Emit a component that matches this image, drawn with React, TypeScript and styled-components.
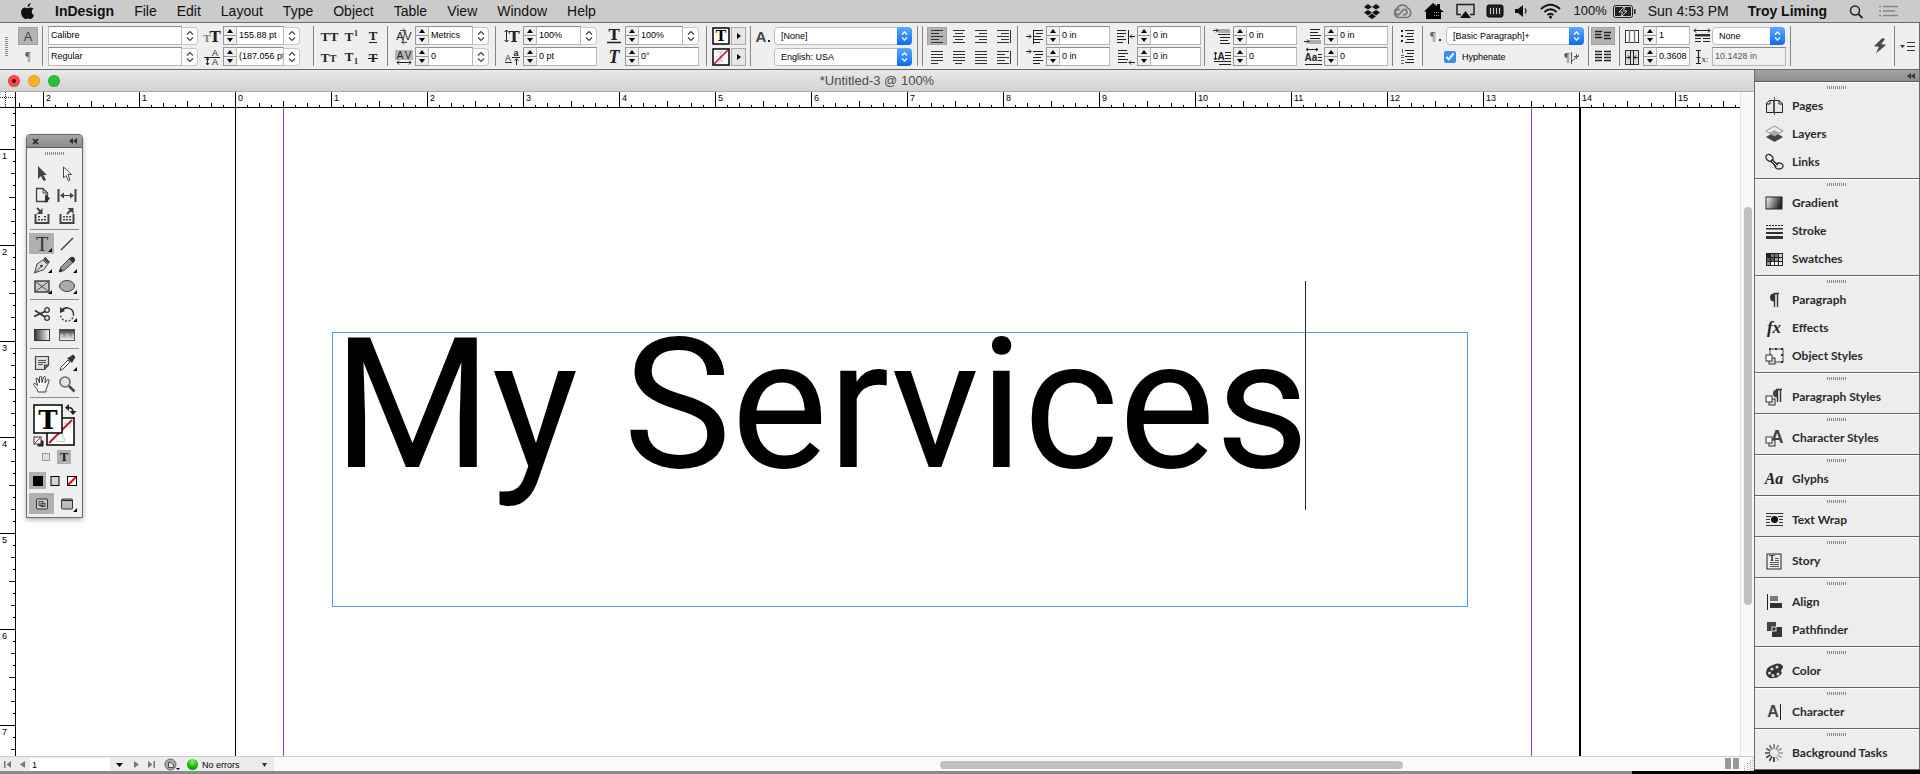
import React from "react";
import styled, { createGlobalStyle, css } from "styled-components";

const GlobalStyle = createGlobalStyle`
  * { box-sizing: border-box; }
  body { margin: 0; background: #8b8b8b; font-family: "Liberation Sans", Arial, sans-serif; color: #000; }
  button, input, select { font: inherit; color: inherit; margin: 0; padding: 0; border: 0; background: none; border-radius: 0; }
  h1, p { margin: 0; font-weight: 400; }
  svg { display: block; flex: none; overflow: visible; }
`;

/* ---------- shell ---------- */
const Page = styled.div`
  display: flex;
  flex-direction: column;
  min-height: 100vh;
  overflow: hidden;
`;
const Workspace = styled.div`
  flex: 1;
  display: flex;
  background: linear-gradient(to right, #8b8b8b 85%, #000 85%);
`;

/* ---------- menu bar ---------- */
const MenuBar = styled.header`
  display: flex;
  align-items: center;
  height: 22px;
  padding: 0 22px 0 20px;
  background: #cbcbcb;
  font-size: 14px;
  line-height: 18px;
  color: #111;
`;
const MenuNav = styled.nav`
  display: flex;
  gap: 20px;
  margin-left: 20px;
  flex: 1;
`;
const MenuItem = styled.button<{ $bold?: boolean }>`
  font-weight: ${(p) => (p.$bold ? 700 : 400)};
  white-space: nowrap;
`;
const StatusItems = styled.div<{ $gap: number }>`
  display: flex;
  align-items: center;
  gap: ${(p) => p.$gap}px;
  white-space: nowrap;
`;
const Battery = styled.span`
  display: flex;
  align-items: center;
  gap: 6px;
  font-size: 13px;
`;

/* ---------- control bar ---------- */
const ControlBar = styled.section`
  display: flex;
  height: 48px;
  border: 1px solid #6a6a6a;
  border-left-width: 0;
  background: #efefef;
  font-size: 9px;
  line-height: 16px;
  padding: 3px 0;
`;
const Section = styled.div<{ $w?: number; $pad?: number; $gap?: number; $plain?: boolean; $end?: boolean }>`
  display: flex;
  flex: none;
  align-items: center;
  height: 40px;
  gap: ${(p) => p.$gap ?? 2}px;
  padding-left: ${(p) => p.$pad ?? 5}px;
  border-left: ${(p) => (p.$plain ? "0" : "1px solid #858585")};
  ${(p) => (p.$w ? css`width: ${p.$w}px;` : css`flex: 1;`)}
  ${(p) => p.$end && css`justify-content: flex-end; padding-right: 4px;`}
`;
const Stack = styled.div`
  display: flex;
  flex-direction: column;
  gap: 2px;
`;
const Row = styled.div<{ $gap?: number }>`
  display: flex;
  align-items: center;
  gap: ${(p) => p.$gap ?? 2}px;
  height: 19px;
`;
const Field = styled.label`
  display: flex;
  align-items: center;
  height: 19px;
`;
const FieldIcon = styled.span<{ $w?: number }>`
  width: ${(p) => p.$w ?? 18}px;
  margin-right: 2px;
  display: flex;
  justify-content: center;
`;
const TextInput = styled.input<{ $w: number; $dim?: boolean }>`
  width: ${(p) => p.$w}px;
  height: 19px;
  padding: 0 0 2px 2px;
  border: 1px solid #b9b9b9;
  border-top-color: #8a8a8a;
  background: ${(p) => (p.$dim ? "#f0f0f0" : "#fff")};
  color: ${(p) => (p.$dim ? "#555" : "#000")};
`;
const ComboButton = styled.button`
  display: flex;
  align-items: center;
  justify-content: center;
  width: 16px;
  height: 18px;
  background: #fff;
  border: 1px solid #c8c8c8;
  border-left: 0;
  border-radius: 0 4px 4px 0;
`;
const Spin = styled.span`
  display: flex;
  flex-direction: column;
  width: 13px;
  height: 19px;
  border: 1px solid #999;
  border-right: 0;
  background: #f0f0f0;
`;
const SpinButton = styled.button`
  flex: 1;
  display: flex;
  align-items: center;
  justify-content: center;
  & + & { border-top: 1px solid #999; }
`;
const IconButton = styled.button<{ $w?: number; $on?: boolean }>`
  display: flex;
  align-items: center;
  justify-content: center;
  width: ${(p) => p.$w ?? 20}px;
  height: 18px;
  background: ${(p) => (p.$on ? "#b3b3b3" : "transparent")};
  box-shadow: ${(p) => (p.$on ? "inset 0 0 0 1px #a2a2a2" : "none")};
`;
const ArrowButton = styled.button`
  display: flex;
  align-items: center;
  justify-content: center;
  width: 15px;
  height: 18px;
  background: #e6e6e6;
  border: 1px solid #aaa;
`;
const SelectBox = styled.span<{ $w: number }>`
  position: relative;
  display: block;
  width: ${(p) => p.$w}px;
  height: 18px;
  svg { position: absolute; right: 0; top: 0; pointer-events: none; }
`;
const Select = styled.select`
  appearance: none;
  width: 100%;
  height: 18px;
  padding: 0 16px 0 6px;
  background: #fff;
  border: 1px solid #bcbcbc;
  border-radius: 4px;
`;
const Check = styled.label`
  display: flex;
  align-items: center;
  gap: 6px;
  padding-left: 18px;
  input { width: 12px; height: 12px; accent-color: #3b8cf5; }
`;
const Grip = styled.i<{ $vertical?: boolean }>`
  display: block;
  ${(p) =>
    p.$vertical
      ? css`width: 3px; height: 19px; background: repeating-linear-gradient(#8a8a8a 0 1px, #efefef 1px 2px);`
      : css`width: 20px; height: 3px; margin: 0 auto; background: repeating-linear-gradient(90deg, #8a8a8a 0 1px, #eee 1px 2px);`}
`;

/* ---------- document window ---------- */
const DocWindow = styled.main`
  flex: 1;
  min-width: 0;
  display: grid;
  grid-template-columns: 16px minmax(0, 1fr) 14px;
  grid-template-rows: 22px 16px minmax(0, 1fr) 15px;
  margin-bottom: 3px;
  background: #fff;
`;
const TitleBar = styled.div`
  grid-column: 1 / -1;
  display: grid;
  grid-template-columns: 60px 1fr 60px;
  align-items: center;
  padding-left: 8px;
  padding-right: 8px;
  background: linear-gradient(#e9e9e9, #d3d3d3);
  border-bottom: 1px solid #ababab;
  font-size: 13px;
  line-height: 20px;
  color: #4b4b4b;
  text-align: center;
`;
const Lights = styled.div`
  display: flex;
  gap: 8px;
`;
const Light = styled.button<{ $c: string }>`
  width: 12px;
  height: 12px;
  border-radius: 50%;
  background: ${(p) => p.$c};
  border: 1px solid rgba(0, 0, 0, 0.12);
  display: flex;
  align-items: center;
  justify-content: center;
`;
const Corner = styled.div`
  overflow: hidden;
  border-right: 1px solid #000;
  border-bottom: 1px solid #000;
`;
const tickX = "linear-gradient(90deg, #000 1px, transparent 1px)";
const tickY = "linear-gradient(#000 1px, transparent 1px)";
const HRuler = styled.div`
  display: flex;
  overflow: hidden;
  border-bottom: 1px solid #000;
`;
const HInch = styled.span`
  flex: none;
  width: 96px;
  padding-left: 2px;
  border-left: 1px solid #000;
  font-size: 9px;
  line-height: 12px;
  background: ${tickX} -1px 100% / 12px 2px repeat-x, ${tickX} -1px 100% / 24px 4px repeat-x,
    ${tickX} -1px 100% / 48px 6px repeat-x;
  &:first-child { margin-left: -69px; }
  &:last-child { flex: 1 0 0; width: auto; min-width: 0; }
`;
const VRuler = styled.div`
  grid-column: 1;
  display: flex;
  flex-direction: column;
  height: 0;
  min-height: 100%;
  overflow: hidden;
  border-right: 1px solid #000;
`;
const VInch = styled.span`
  flex: none;
  height: 96px;
  padding-left: 2px;
  border-top: 1px solid #000;
  font-size: 9px;
  line-height: 12px;
  background: ${tickY} 100% -1px / 2px 12px repeat-y, ${tickY} 100% -1px / 4px 24px repeat-y,
    ${tickY} 100% -1px / 6px 48px repeat-y;
  &:first-child { margin-top: -55px; }
  &:last-child { flex: 1 0 0; height: auto; }
`;
const Canvas = styled.div`
  position: relative;
  overflow: hidden;
  min-height: 648px;
`;
const Guide = styled.i<{ $x: number; $c: string; $w?: number }>`
  position: absolute;
  top: 0;
  bottom: 0;
  left: ${(p) => p.$x}px;
  width: ${(p) => p.$w ?? 1}px;
  background: ${(p) => p.$c};
`;
const TextFrame = styled.div`
  position: absolute;
  left: 316px;
  top: 224px;
  width: 1136px;
  height: 275px;
  border: 1px solid #4a9cf8;
`;
const Headline = styled.h1`
  position: relative;
  display: inline-block;
  font-family: Roboto, sans-serif;
  font-size: 182px;
  line-height: 144px;
  white-space: nowrap;
`;
const Caret = styled.i`
  position: absolute;
  right: 3px;
  top: -52px;
  width: 1px;
  height: 229px;
  background: #222;
`;
const VScroll = styled.div`
  grid-column: 3;
  grid-row: 2 / 4;
  padding: 115px 2px 0 3px;
  background: #f9f9f9;
  border-left: 1px solid #e2e2e2;
`;
const Thumb = styled.i<{ $w: number; $h: number }>`
  display: block;
  width: ${(p) => p.$w}px;
  height: ${(p) => p.$h}px;
  border-radius: 4px;
  background: #c0c0c0;
`;
const StatusBar = styled.footer`
  grid-column: 1 / -1;
  display: flex;
  align-items: stretch;
  background: #fafafa;
  border-top: 1px solid #ccc;
  font-size: 9px;
  line-height: 14px;
`;
const StatusControls = styled.div`
  display: flex;
  align-items: center;
  width: 274px;
  padding-top: 1px;
  background: #ececec;
`;
const StatusButton = styled.button<{ $w: number }>`
  display: flex;
  align-items: center;
  justify-content: center;
  width: ${(p) => p.$w}px;
  height: 13px;
`;
const PageInput = styled.input`
  width: 80px;
  height: 13px;
  padding-left: 2px;
  background: #fff;
`;
const Preflight = styled.button`
  display: flex;
  align-items: center;
  gap: 4px;
  width: 68px;
  padding-left: 1px;
  white-space: nowrap;
`;
const Lamp = styled.i`
  width: 11px;
  height: 11px;
  border-radius: 50%;
  background: radial-gradient(circle at 50% 25%, #8ff25c, #14b50a 55%, #0a8a08);
`;
const HTrack = styled.div`
  flex: 1;
  display: flex;
  align-items: center;
  padding-left: 666px;
  padding-top: 1px;
`;

/* ---------- dock ---------- */
const Dock = styled.aside`
  flex: none;
  align-self: flex-start;
  width: 166px;
  border-left: 1px solid #6a6a6a;
  border-right: 1px solid #6a6a6a;
  background: #ededed;
`;
const DockHead = styled.div`
  display: flex;
  justify-content: flex-end;
  align-items: center;
  height: 12px;
  padding-right: 4px;
  background: linear-gradient(#a3a3a3, #8e8e8e);
  border-bottom: 1px solid #5c5c5c;
`;
const DockGroup = styled.div`
  padding: 4px 0 2px;
  border-bottom: 1px solid #666;
  box-shadow: inset 0 1px #fff;
`;
const DockItem = styled.button`
  display: flex;
  align-items: center;
  width: 100%;
  height: 28px;
  gap: 8px;
  padding-left: 10px;
  font-family: Lato, sans-serif;
  font-weight: 700;
  font-size: 12px;
  line-height: 16px;
  color: #2a2a2a;
  white-space: nowrap;
  ${Grip} + & { margin-top: 3px; }
`;

/* ---------- tool palette ---------- */
const Palette = styled.div`
  position: absolute;
  left: 10px;
  top: 26px;
  width: 57px;
  padding-bottom: 3px;
  border: 1px solid #6a6a6a;
  border-radius: 4px 4px 0 0;
  background: #efefef;
  box-shadow: 0 2px 5px rgba(0, 0, 0, 0.3);
`;
const PaletteHead = styled.div`
  display: flex;
  align-items: center;
  justify-content: space-between;
  height: 13px;
  margin-bottom: 4px;
  padding: 0 5px;
  border-radius: 3px 3px 0 0;
  background: linear-gradient(#a5a5a5, #8c8c8c);
  border-bottom: 1px solid #5c5c5c;
`;
const ToolGrid = styled.div<{ $first?: boolean }>`
  display: grid;
  grid-template-columns: 25px 25px;
  margin: ${(p) => (p.$first ? "8px 2px 3px" : "0 2px 3px")};
`;
const ModeGrid = styled.div`
  display: grid;
  grid-template-columns: 25px 25px;
  margin: 0 2px;
`;
const Rule = styled.hr`
  height: 1px;
  border: 0;
  margin: 0 3px 3px;
  background: #8c8c8c;
`;
const Tool = styled.button<{ $on?: boolean }>`
  position: relative;
  display: flex;
  align-items: center;
  justify-content: center;
  width: 25px;
  height: 21px;
  background: ${(p) => (p.$on ? "#b0b0b0" : "transparent")};
`;
const Flyout = styled.i`
  position: absolute;
  right: 2px;
  bottom: 2px;
  border: 2px solid transparent;
  border-right-color: #000;
  border-bottom-color: #000;
`;
const SwatchArea = styled.div`
  display: flex;
  justify-content: center;
  padding: 3px 0;
`;
const MiniRow = styled.div<{ $gap: number; $below: number }>`
  display: flex;
  justify-content: center;
  gap: ${(p) => p.$gap}px;
  padding-bottom: ${(p) => p.$below}px;
`;
const Mini = styled.button<{ $on?: boolean; $w: number; $h: number }>`
  display: flex;
  align-items: center;
  justify-content: center;
  width: ${(p) => p.$w}px;
  height: ${(p) => p.$h}px;
  background: ${(p) => (p.$on ? "#b0b0b0" : "transparent")};
`;

/* ---------- drawings ---------- */
const SERIF = "Liberation Serif, serif";
const SLAB = "DejaVu Serif, serif";
const SANS = "Liberation Sans, sans-serif";

const G = ({ x, y, s, b, i, c, f, children }: any) => (
  <text x={x} y={y} fontSize={s} fontWeight={b ? 700 : 400} fontStyle={i ? "italic" : "normal"} fill={c || "#222"} fontFamily={f || SERIF} textAnchor="middle">
    {children}
  </text>
);
const Svg = ({ w = 18, h = 18, children }: any) => (
  <svg width={w} height={h} viewBox={`0 0 ${w} ${h}`} fill="none" stroke="none" aria-hidden="true">
    {children}
  </svg>
);
const L = ({ d, c = "#222", w = 1, ...r }: any) => <path d={d} stroke={c} strokeWidth={w} {...r} />;

const Chevrons = () => (
  <Svg w={8} h={12}>
    <L d="M1 4.500L4 1.500L7 4.500M1 7.500L4 10.500L7 7.500" c="#444" w={1.2} />
  </Svg>
);
const BlueCap = () => (
  <svg width="15" height="18" viewBox="0 0 15 18" aria-hidden="true">
    <defs>
      <linearGradient id="cap" x1="0" y1="0" x2="0" y2="1">
        <stop offset="0" stopColor="#5caafc" />
        <stop offset="1" stopColor="#0a6cf5" />
      </linearGradient>
    </defs>
    <path d="M0 0H11a4 4 0 0 1 4 4V14a4 4 0 0 1-4 4H0z" fill="url(#cap)" />
    <path d="M5 7.500L7.500 5L10 7.500M5 10.500L7.500 13L10 10.500" stroke="#fff" strokeWidth="1.300" fill="none" />
  </svg>
);
const Tri = ({ dir, c = "#000", w = 6, h = 4 }: any) => {
  const d: any = { up: `M0 ${h}L${w / 2} 0L${w} ${h}z`, down: `M0 0H${w}L${w / 2} ${h}z`, right: `M0 0L${w} ${h / 2}L0 ${h}z`, left: `M${w} 0L0 ${h / 2}L${w} ${h}z` };
  return (
    <Svg w={w} h={h}>
      <path d={d[dir]} fill={c} />
    </Svg>
  );
};
const DoubleLeft = () => (
  <Svg w={8} h={6}>
    <path d="M4 0L0 3L4 6zM8 0L4 3L8 6z" fill="#333" />
  </Svg>
);

const lines = (rows: number[][]) => rows.map((r) => `M${r[1]} ${r[0] + 0.5}H${r[2]}`).join("");

const barIcons: Record<string, React.ReactNode> = {
  size: (<><G x="4" y="15" s="10" b c="#888" f={SLAB}>T</G><G x="12" y="15" s="15" b f={SLAB}>T</G></>),
  leading: (<><G x="12" y="8" s="9" f={SANS}>A</G><G x="12" y="17" s="9" f={SANS}>A</G><L d="M1 9.500H17M4.500 10V17M3 15L4.500 17L6 15M3 12L4.500 10L6 12" /></>),
  kern: (<><G x="5" y="13" s="11" f={SANS}>A</G><G x="13" y="13" s="11" f={SANS}>V</G><L d="M10.500 3L7.500 15M5 3.500H10M8 1.500L10 3.500L8 5.500M7 15.500H12M9 13.500L7 15.500L9 17.500" w={0.8} /></>),
  track: (<><rect y="2" width="18" height="10" fill="#b5b5b5" /><G x="5" y="11" s="10" f={SANS}>A</G><G x="13" y="11" s="10" f={SANS}>V</G><L d="M2 14.500H16M4 12.500L2 14.500L4 16.500M14 12.500L16 14.500L14 16.500" /></>),
  vscale: (<><L d="M3.500 3V15M1.500 5L3.500 3L5.500 5M1.500 13L3.500 15L5.500 13" /><G x="11" y="15" s="15" b f={SLAB}>T</G></>),
  hscale: (<><G x="9" y="13" s="15" b f={SLAB}>T</G><L d="M2 15.500H16" w={1.5} /></>),
  baseline: (<><G x="5" y="13" s="9" f={SANS}>A</G><G x="13" y="8" s="9" b f={SANS}>a</G><L d="M2 14.500H9M9 9.500H17M13.500 17V11M11.500 12.500L13.500 11L15.500 12.500" /></>),
  skew: <G x="9" y="15" s="18" b i>T</G>,
  indL: <L d={lines([[3, 8, 17], [6, 10, 17], [9, 8, 15], [12, 8, 17], [15, 8, 14]]) + "M7.500 3V17M0 9.500H5M3 7.500L5 9.500L3 11.500"} />,
  indR: <L d={lines([[3, 0, 9], [6, 0, 9], [9, 0, 7], [12, 0, 9], [15, 0, 6]]) + "M11.500 3V17M18 9.500H13M15 7.500L13 9.500L15 11.500"} />,
  indF: <L d={lines([[3, 7, 17], [6, 9, 17], [9, 7, 15], [12, 7, 17], [15, 7, 14]]) + "M0 3.500H5M3 1.500L5 3.500L3 5.500"} />,
  indLast: <L d={lines([[2, 1, 10], [5, 1, 11], [8, 1, 8], [11, 1, 11], [14, 1, 10]]) + "M18 14.500H12M14 12.500L12 14.500L14 16.500"} />,
  before: (<><rect x="5" y="2" width="12" height="4" fill="#aaa" /><L d={lines([[7, 5, 17], [10, 7, 17], [13, 7, 15], [16, 7, 17]]) + "M0 3.500H5M3 1.500L5 3.500L3 5.500"} /></>),
  after: (<><rect x="5" y="13" width="12" height="4" fill="#aaa" /><L d={lines([[2, 6, 16], [5, 6, 14], [8, 6, 17], [11, 6, 16]]) + "M0 14.500H5M3 12.500L5 14.500L3 16.500"} /></>),
  dropLines: (<><L d={lines([[4, 12, 18], [7, 12, 18], [10, 12, 18], [13, 1, 18], [16, 6, 18]]) + "M2.500 4V12M1 6L2.500 4L4 6M1 10L2.500 12L4 10"} /><G x="8" y="12" s="10" b f={SANS}>A</G></>),
  dropChars: (<><L d={lines([[6, 14, 18], [9, 14, 18], [12, 14, 18], [16, 1, 18]]) + "M2 1.500H14M4 0L2 1.500L4 3M12 0L14 1.500L12 3"} /><G x="7" y="13" s="10" b f={SANS}>Aa</G></>),
  bullets: (<><L d={lines([[3, 6, 15], [6, 8, 15], [9, 6, 14], [12, 8, 15], [15, 6, 15]])} w={1.2} /><path d="M2 3h2v2H2zM2 8h2v2H2zM2 13h2v2H2z" fill="#222" /></>),
  numbers: (<><L d={lines([[3, 6, 15], [6, 8, 15], [9, 6, 14], [12, 8, 15], [15, 6, 15]])} w={1.2} /><L d="M3.500 2V6M2 8.500H5M2 10.500H5M2 13.500H5M2 16.500H5" c="#666" /></>),
  cols: (<><rect x="2.500" y="3.500" width="13" height="12" fill="#fff" stroke="#333" /><L d="M6.500 3V16M11.500 3V16" c="#777" w={1.5} /></>),
  gutter: (<><rect x="2.500" y="2.500" width="13" height="14" fill="#ddd" stroke="#333" /><L d="M7.500 2V17M10.500 2V17M3 9.500H7M5 7.500L7 9.500L5 11.500M15 9.500H11M13 7.500L11 9.500L13 11.500" /></>),
  span: (<><L d="M1 3.500H17M3 1.500L1 3.500L3 5.500M15 1.500L17 3.500L15 5.500" /><rect x="2" y="7" width="15" height="2.500" fill="#333" /><L d="M2 11.500H8M10 11.500H17M2 14.500H8M10 14.500H17" /></>),
  xpos: (<><L d="M3 2.500H5.500M8 2.500H5.500M5.500 3V15M3 15.500H8M3.500 9.500H7.500" w={1.2} /><G x="12" y="14" s="9">x:</G></>),
};
const Icon = ({ n }: { n: string }) => <Svg>{barIcons[n]}</Svg>;

const Stepper = ({ label }: { label: string }) => (
  <Spin>
    <SpinButton aria-label={`Increase ${label}`}><Tri dir="up" /></SpinButton>
    <SpinButton aria-label={`Decrease ${label}`}><Tri dir="down" /></SpinButton>
  </Spin>
);
const Num = ({ icon, label, value, w, combo, iw, dim, plain }: any) => (
  <Field>
    {icon && <FieldIcon $w={iw}><Icon n={icon} /></FieldIcon>}
    {!plain && <Stepper label={label} />}
    <TextInput aria-label={label} defaultValue={value} $w={w} $dim={dim} readOnly={dim} />
    {combo && <ComboButton aria-label={`${label} presets`}><Chevrons /></ComboButton>}
  </Field>
);
const Drop = ({ label, value, w }: any) => (
  <SelectBox $w={w}>
    <Select aria-label={label} defaultValue={value}><option>{value}</option></Select>
    <BlueCap />
  </SelectBox>
);
const glyphBtns = [
  ["All caps", <><G x="5" y="14" s="13" b>T</G><G x="14" y="14" s="13" b>T</G></>],
  ["Superscript", <><G x="7" y="14" s="13" b>T</G><G x="14" y="9" s="8" b>1</G></>],
  ["Underline", <><G x="9" y="13" s="13" b>T</G><L d="M5 15.500H13" /></>],
  ["Small caps", <><G x="5" y="14" s="13" b>T</G><G x="13" y="14" s="10" b>T</G></>],
  ["Subscript", <><G x="7" y="13" s="13" b>T</G><G x="14" y="16" s="8" b>1</G></>],
  ["Strikethrough", <><G x="9" y="14" s="13" b>T</G><L d="M4 10.500H14" /></>],
] as [string, React.ReactNode][];

const para = (a: string, last: string, bar?: boolean) => {
  const rows: number[][] = [];
  for (let k = 0; k < 5; k++) {
    const y = 3 + k * 3;
    const len = a === "full" || k % 2 === 0 ? 12 : 8;
    let x = a === "right" ? 15 - len : a === "center" ? 9 - len / 2 : 3;
    let l = len;
    if (k === 4 && a === "full" && last !== "full") {
      l = 7;
      x = last === "center" ? 5 : 3;
    }
    rows.push([y, x, x + l]);
  }
  return <Svg><L d={lines(rows) + (bar ? "M16.500 3V16" : "")} c="#333" /></Svg>;
};
const aligns: [string, React.ReactNode][][] = [
  [["Align left", para("left", "")], ["Align center", para("center", "")], ["Align right", para("right", "")], ["Align away from spine", para("right", "", true)]],
  [["Justify last left", para("full", "left")], ["Justify last center", para("full", "center")], ["Justify all", para("full", "full")], ["Align towards spine", para("left", "", true)]],
];

const TSwatch = ({ none }: { none?: boolean }) => (
  <Svg>
    <rect x="1" y="1" width="16" height="16" fill="#fff" stroke="#000" strokeWidth="1.500" />
    <G x="9" y="14" s="14" b f={SLAB} c={none ? "#d8d8d8" : "#000"}>T</G>
    {none && <L d="M2 16L16 2" c="#c8102e" w={1.6} />}
  </Svg>
);

const Controls = () => (
  <ControlBar aria-label="Control panel">
    <Section $plain $w={42} $gap={10}>
      <Grip $vertical />
      <Stack>
        <IconButton $on aria-label="Character formatting"><Svg><G x="9" y="14" s="13" f={SANS} c="#444">A</G></Svg></IconButton>
        <IconButton aria-label="Paragraph formatting"><Svg><G x="9" y="13" s="12" c="#555">¶</G></Svg></IconButton>
      </Stack>
    </Section>
    <Section $w={271} $gap={5}>
      <Stack>
        <Num plain combo label="Font family" value="Calibre" w={134} />
        <Num plain combo label="Font style" value="Regular" w={134} />
      </Stack>
      <Stack>
        <Num icon="size" combo label="Font size" value="155.88 pt" w={48} />
        <Num icon="leading" combo label="Leading" value="(187.056 pt)" w={48} />
      </Stack>
    </Section>
    <Section $w={74}>
      <Stack>
        {[0, 3].map((o) => (
          <Row key={o}>
            {glyphBtns.slice(o, o + 3).map(([n, g]) => <IconButton key={n} aria-label={n}><Svg>{g}</Svg></IconButton>)}
          </Row>
        ))}
      </Stack>
    </Section>
    <Section $w={108} $pad={7}>
      <Stack>
        <Num icon="kern" combo label="Kerning" value="Metrics" w={45} />
        <Num icon="track" combo label="Tracking" value="0" w={45} />
      </Stack>
    </Section>
    <Section $w={211} $pad={7} $gap={8}>
      <Stack>
        <Num icon="vscale" combo label="Vertical scale" value="100%" w={45} />
        <Num icon="baseline" label="Baseline shift" value="0 pt" w={61} />
      </Stack>
      <Stack>
        <Num icon="hscale" combo label="Horizontal scale" value="100%" w={45} />
        <Num icon="skew" label="Skew" value="0°" w={61} />
      </Stack>
    </Section>
    <Section $w={44}>
      <Stack>
        <Row $gap={1}><TSwatch /><ArrowButton aria-label="Fill options"><Tri dir="right" w={4} h={6} /></ArrowButton></Row>
        <Row $gap={1}><TSwatch none /><ArrowButton aria-label="Stroke options"><Tri dir="right" w={4} h={6} /></ArrowButton></Row>
      </Stack>
    </Section>
    <Section $w={167} $pad={3}>
      <Stack>
        <Row><Svg><G x="7" y="15" s="15" b f={SANS} c="#444">A</G><rect x="14" y="13" width="2" height="2" fill="#222" /></Svg><Drop label="Character style" value="[None]" w={138} /></Row>
        <Row><Svg /><Drop label="Language" value="English: USA" w={138} /></Row>
      </Stack>
    </Section>
    <Section $w={5} $pad={0} />
    <Section $w={95} $pad={4}>
      <Stack>
        {aligns.map((r, k) => (
          <Row key={k}>{r.map(([n, g], j) => <IconButton key={n} $on={k === 0 && j === 0} aria-label={n}>{g}</IconButton>)}</Row>
        ))}
      </Stack>
    </Section>
    <Section $w={187} $pad={8} $gap={7}>
      <Stack>
        <Num icon="indL" label="Left indent" value="0 in" w={51} />
        <Num icon="indF" label="First line indent" value="0 in" w={51} />
      </Stack>
      <Stack>
        <Num icon="indR" label="Right indent" value="0 in" w={51} />
        <Num icon="indLast" label="Last line indent" value="0 in" w={51} />
      </Stack>
    </Section>
    <Section $w={188} $pad={8} $gap={7}>
      <Stack>
        <Num icon="before" label="Space before" value="0 in" w={51} />
        <Num icon="dropLines" label="Drop cap lines" value="0" w={51} />
      </Stack>
      <Stack>
        <Num icon="after" label="Space after" value="0 in" w={51} />
        <Num icon="dropChars" label="Drop cap characters" value="0" w={51} />
      </Stack>
    </Section>
    <Section $w={30}>
      <Stack>
        <IconButton aria-label="Bulleted list"><Icon n="bullets" /></IconButton>
        <IconButton aria-label="Numbered list"><Icon n="numbers" /></IconButton>
      </Stack>
    </Section>
    <Section $w={166} $pad={3}>
      <Stack>
        <Row><Svg><G x="7" y="13" s="13" c="#666">¶</G><rect x="13" y="12" width="2" height="2" fill="#222" /></Svg><Drop label="Paragraph style" value="[Basic Paragraph]+" w={138} /></Row>
        <Row $gap={56}>
          <Check><input type="checkbox" defaultChecked />Hyphenate</Check>
          <Svg><G x="5" y="13" s="12" c="#555">¶</G><L d="M9.500 4V16M10 13L17 7M12 8.500H17M14.500 6V11" c="#555" /></Svg>
        </Row>
      </Stack>
    </Section>
    <Section $w={31} $pad={2}>
      <Stack>
        <IconButton $on $w={24} aria-label="Align to baseline off"><Svg><L d={lines([[4, 1, 8], [7, 1, 7], [10, 1, 8], [5, 10, 17], [8, 10, 16], [11, 10, 17]])} w={1.3} /></Svg></IconButton>
        <IconButton $w={24} aria-label="Align to baseline grid"><Svg><L d={lines([[4, 1, 8], [7, 1, 8], [10, 1, 8], [13, 1, 8], [4, 10, 17], [7, 10, 17], [10, 10, 17], [13, 10, 17]])} w={1.3} /></Svg></IconButton>
      </Stack>
    </Section>
    <Section $w={171} $pad={3} $gap={4}>
      <Stack>
        <Num icon="cols" label="Columns" value="1" w={34} />
        <Num icon="gutter" label="Gutter" value="0.3608" w={34} />
      </Stack>
      <Stack>
        <Row $gap={0}><FieldIcon $w={16}><Icon n="span" /></FieldIcon><Drop label="Span columns" value="None" w={73} /></Row>
        <Num plain dim icon="xpos" iw={16} label="Cursor position" value="10.1428 in" w={74} />
      </Stack>
    </Section>
    <Section $end>
      <IconButton aria-label="Quick apply">
        <Svg><path d="M10 1L3 10H8L6 17L15 7H10L13 1z" fill="#4a4a4a" transform="rotate(8 9 9)" /></Svg>
      </IconButton>
    </Section>
    <Section $w={25}>
      <IconButton $w={16} aria-label="Panel menu">
        <Svg w={16} h={12}><path d="M0 5h5l-2.500 3z" fill="#333" /><L d="M7 2.500H15M7 6.500H15M7 10.500H15" c="#333" /></Svg>
      </IconButton>
    </Section>
  </ControlBar>
);

/* ---------- tools ---------- */
const toolIcons: Record<string, React.ReactNode> = {
  select: <path d="M6 2L6 15L9 12L11.500 17L14 16L11.500 11H15z" fill="#444" />,
  direct: <path d="M6.500 3L6.500 14L9 11.500L11.500 17L13 16L11 10.500H14.500z" fill="#fff" stroke="#444" />,
  page: (<><path d="M4.500 3.500H11L15.500 8V16.500H4.500z" fill="#eee" stroke="#444" strokeWidth="1.300" /><L d="M11 3.500V8H15.500" c="#444" /><path d="M13 9v9l5-4.500z" fill="#333" /></>),
  gap: (<><L d="M1.500 4V17M18.500 4V17" c="#444" w={2} /><L d="M4 10.500H16" c="#444" /><path d="M3 10.500l4-3v6zM17 10.500l-4-3v6z" fill="#444" /></>),
  collect: (<><L d="M3.500 8V17H16.500V8" c="#444" w={2} /><path d="M5 2l4 4" stroke="#444" strokeWidth="1.800" /><path d="M10.500 2v6h-6z" fill="#444" /><path d="M6 10h2v1.500H6zM12 10h2v1.500h-2zM6 13h2v1.500H6zM9 13h2v1.500H9zM12 13h2v1.500h-2z" fill="#444" /></>),
  place: (<><L d="M3.500 8V17H16.500V8" c="#444" w={2} /><path d="M10 8l4-4" stroke="#444" strokeWidth="1.800" /><path d="M16.500 2v6l-6-6z" fill="#444" /><path d="M6 10h2v1.500H6zM9 10h2v1.500H9zM12 10h2v1.500h-2zM6 13h2v1.500H6zM9 13h2v1.500H9zM12 13h2v1.500h-2z" fill="#444" /></>),
  type: <G x="10" y="17" s="20" c="#333">T</G>,
  line: <L d="M4 16L16 4" c="#333" w={1.3} />,
  pen: (<><path d="M2.500 18L5 9L11 5L15.500 9.500L12 14.500z" fill="#ddd" stroke="#444" /><L d="M2.500 18L9 11.500" c="#444" /><circle cx="9.500" cy="11" r="1.300" fill="#333" /><path d="M11 4L13.500 2L18 7L16 9z" fill="#444" /></>),
  pencil: (<><path d="M2 17L4 12L13 3L17 6.500L7 15.500z" fill="#999" stroke="#444" /><path d="M12 4L14 2Q17 1 18 4V6L16 8z" fill="#333" /><path d="M2 17l1.500-4 2.500 2.500z" fill="#333" /></>),
  frame: (<><rect x="3" y="5" width="14" height="11" fill="#ccc" stroke="#444" strokeWidth="1.500" /><L d="M3 5L17 16M17 5L3 16" c="#444" /></>),
  ellipse: <ellipse cx="10" cy="10" rx="7.500" ry="5.500" fill="#aaa" stroke="#444" />,
  scissors: (<><L d="M3 6.500L13 13M2 12.500L13 7.500" c="#333" w={1.7} /><circle cx="15" cy="6" r="2.300" stroke="#333" strokeWidth="1.300" /><circle cx="15" cy="14" r="2.300" stroke="#333" strokeWidth="1.300" /></>),
  rotate: (<><path d="M4.500 7A6.500 6.500 0 0 1 16.500 10" stroke="#333" strokeWidth="1.500" /><path d="M16.500 10A6.500 6.500 0 0 1 3.500 11" stroke="#555" strokeWidth="1.500" strokeDasharray="2 1.500" /><path d="M3 3v6l5-2z" fill="#333" /></>),
  gradient: (<><defs><linearGradient id="tg"><stop stopColor="#333" /><stop offset="1" stopColor="#fff" /></linearGradient></defs><rect x="2.500" y="4.500" width="15" height="11" fill="url(#tg)" stroke="#333" /></>),
  feather: (<><defs><linearGradient id="fg" x1="0" x2="0" y1="0" y2="1"><stop stopColor="#333" /><stop offset="1" stopColor="#fff" /></linearGradient></defs><rect x="2.500" y="4.500" width="15" height="11" fill="url(#fg)" stroke="#555" /><path d="M3 9h3v3H3zM9 9h3v3H9zM15 9h2v3h-2z" fill="#fff" opacity="0.300" /></>),
  note: (<><path d="M3.500 3.500H16.500V12L12.500 16.500H3.500z" fill="#ddd" stroke="#444" strokeWidth="1.200" /><path d="M16.500 12H12.500V16.500z" fill="#777" stroke="#444" /><L d="M6 7.500H14M6 9.500H14M6 11.500H11" c="#555" /></>),
  dropper: (<><path d="M3 17.500L4 14L11 7L13 9L6 16z" fill="#fff" stroke="#444" /><path d="M10 5L15 10L16 8L18.500 4L16 1.500L12.500 4z" fill="#333" /></>),
  hand: <path d="M6 18L5 15L1.500 10.500Q1.500 8.500 4 10L5.500 11.500L4 5Q4.500 3 6 5L7.500 9L7.500 3Q8.500 1 9.500 3L10 8.500L11.500 3Q13 1.500 13.500 3.500L13 9L15.500 5.500Q17.500 5 17 7L15.500 12L14 15.500V18z" fill="#f4f4f4" stroke="#444" />,
  zoom: (<><circle cx="8" cy="8" r="5" fill="#e4e4e4" stroke="#666" strokeWidth="1.500" /><L d="M12 12L17.500 17.500" c="#444" w={2.500} /></>),
};
const toolGroups: [string, boolean?][][] = [
  [["select"], ["direct"], ["page"], ["gap"], ["collect"], ["place"]],
  [["type", true], ["line"], ["pen", true], ["pencil", true], ["frame", true], ["ellipse", true]],
  [["scissors"], ["rotate", true], ["gradient"], ["feather"]],
  [["note"], ["dropper", true], ["hand"], ["zoom"]],
];
const ToolPalette = () => (
  <Palette role="toolbar" aria-label="Tools">
    <PaletteHead>
      <Svg w={7} h={7}><L d="M1 1L6 6M6 1L1 6" w={1.6} /></Svg>
      <DoubleLeft />
    </PaletteHead>
    <Grip />
    {toolGroups.map((g, k) => (
      <React.Fragment key={k}>
        <ToolGrid $first={k === 0}>
          {g.map(([n, fly]) => (
            <Tool key={n} $on={n === "type"} aria-label={n}>
              <Svg w={20} h={20}>{toolIcons[n]}</Svg>
              {fly && <Flyout />}
            </Tool>
          ))}
        </ToolGrid>
        <Rule />
      </React.Fragment>
    ))}
    <SwatchArea>
      <Svg w={43} h={43}>
        <rect x="14" y="14" width="27" height="27" fill="#fff" stroke="#000" strokeWidth="1.500" />
        <path d="M31 19.500H37.500V24M24 37.500H31.500V34.500H30V30M24 37.500V34.500" stroke="#d0d0d0" strokeWidth="1.200" />
        <L d="M16 39L39 16" c="#c8102e" w={2} />
        <rect x="1" y="1" width="28" height="28" fill="#fff" stroke="#000" strokeWidth="1.500" />
        <G x="15" y="25" s="26" b f={SLAB} c="#000">T</G>
        <path d="M35 3.500Q40 3.500 40 8" stroke="#222" strokeWidth="1.500" />
        <path d="M32 3.500l4-3.500v7zM40 11l-3.500-4h7z" fill="#222" />
        <rect x="4.500" y="36.500" width="6" height="6" fill="#222" />
        <rect x="1" y="33" width="7" height="7" fill="#fff" stroke="#333" />
        <L d="M2 39L7 34" c="#c8102e" />
      </Svg>
    </SwatchArea>
    <MiniRow $gap={4} $below={8}>
      <Mini $w={14} $h={14} aria-label="Formatting affects container"><Svg w={8} h={8}><rect x="0.500" y="0.500" width="7" height="7" fill="#ddd" stroke="#999" /></Svg></Mini>
      <Mini $w={14} $h={14} $on aria-label="Formatting affects text"><Svg w={12} h={12}><G x="6" y="10" s="11" b f={SLAB}>T</G></Svg></Mini>
    </MiniRow>
    <MiniRow $gap={0} $below={4}>
      <Mini $w={17} $h={17} $on aria-label="Apply color"><Svg w={10} h={10}><rect width="10" height="10" fill="#000" /></Svg></Mini>
      <Mini $w={17} $h={17} aria-label="Apply gradient"><Svg w={10} h={10}><rect x="1" y="0.500" width="8" height="9" fill="#d5d5d5" stroke="#000" /></Svg></Mini>
      <Mini $w={17} $h={17} aria-label="Apply none"><Svg w={10} h={10}><rect x="0.500" y="0.500" width="9" height="9" fill="#fff" stroke="#000" /><L d="M1 9L9 1" c="#e00" w={2} /></Svg></Mini>
    </MiniRow>
    <ModeGrid>
      <Tool $on aria-label="Normal view"><Svg w={12} h={12}><rect x="0.500" y="1" width="11" height="10" rx="1" fill="#ccc" stroke="#333" /><rect x="3" y="3.500" width="4" height="4" stroke="#444" /><rect x="5" y="5.500" width="4" height="3" stroke="#444" /></Svg></Tool>
      <Tool aria-label="Preview"><Svg w={12} h={12}><rect x="0.500" y="1" width="11" height="10" rx="1" fill="#bbb" stroke="#333" /><L d="M1 2.500H11" /></Svg><Flyout /></Tool>
    </ModeGrid>
  </Palette>
);

/* ---------- dock icons ---------- */
const overlay = (<><rect x="4" y="11" width="6" height="6" fill="#ddd" stroke="#333" /><rect x="1" y="8" width="6" height="6" fill="#fff" stroke="#333" /></>);
const dockIcons: Record<string, React.ReactNode> = {
  Pages: (<><path d="M1.500 15.500V6L4.500 3.500H9V15.500zM9 15.500V3.500H14L17.500 6.500V15.500z" fill="#e6e6e6" stroke="#222" /><L d="M9.500 0V18" c="#555" /><L d="M5 4V7H2M14 4V7H17" /></>),
  Layers: (<><path d="M1 12L9.500 7L18 12L9.500 17z" fill="#444" /><path d="M1 6L9.500 1L18 6L9.500 11z" fill="#eee" stroke="#777" strokeWidth="0.800" /><path d="M4 8L9.500 5L15 8L9.500 11z" fill="#aaa" /></>),
  Links: (<><ellipse cx="4.500" cy="5" rx="4" ry="3" transform="rotate(40 4.500 5)" stroke="#333" strokeWidth="1.400" /><ellipse cx="14" cy="13" rx="4" ry="3" stroke="#333" strokeWidth="1.400" /><path d="M6 7L12 13" stroke="#333" strokeWidth="3.500" /><path d="M7 8L12 13" stroke="#ddd" strokeWidth="1" /></>),
  Gradient: (<><defs><linearGradient id="dg" x1="0" x2="1" y1="0" y2="0.300"><stop stopColor="#fff" /><stop offset="1" stopColor="#222" /></linearGradient></defs><rect x="1" y="3" width="16" height="12" fill="url(#dg)" stroke="#222" /></>),
  Stroke: (<><L d="M1 3.500H18" strokeDasharray="2 1" /><path d="M1 6h17v1.500H1zM1 10h17v2H1zM1 14h17v3H1z" fill="#333" /></>),
  Swatches: (<><rect x="1" y="3" width="17" height="13" fill="#222" /><path d="M6 4h3v3H6zM10 4h3v3h-3z" fill="#777" /><path d="M14 4h3v3h-3zM14 8h3v3h-3z" fill="#ccc" /><path d="M2 8h3v3H2zM6 8h3v3H6z" fill="#555" /><path d="M10 8h3v3h-3zM2 12h3v3H2z" fill="#999" /><path d="M6 12h3v3H6zM10 12h3v3h-3zM14 12h3v3h-3z" fill="#fff" /></>),
  Paragraph: (<><path d="M9 2.500a4 4 0 0 0 0 8z" fill="#333" /><L d="M9.500 2V16M12.500 2V16M9 2.500H14" c="#333" w={1.4} /></>),
  Effects: <G x="9" y="14" s="17" b i>fx</G>,
  "Object Styles": (<><rect x="5" y="2" width="13" height="13" fill="#f2f2f2" stroke="#444" /><path d="M4 1h2v2H4zM10 1h2v2h-2zM16 1h2v2h-2zM16 7h2v2h-2zM16 14h2v2h-2z" fill="#333" />{overlay}</>),
  "Paragraph Styles": (<><path d="M12 1.500a4 4 0 0 0 0 8z" fill="#444" /><L d="M12.500 1V14M15.500 1V14M11 1.500H17" c="#333" w={1.400} />{overlay}</>),
  "Character Styles": (<><G x="12" y="14" s="18" b f={SANS} c="#444">A</G>{overlay}</>),
  Glyphs: <G x="9" y="14" s="16" b i>Aa</G>,
  "Text Wrap": (<><L d="M1 2.500H18M1 5.500H6M13 5.500H18M1 8.500H5M14 8.500H18M1 11.500H5M14 11.500H18M1 14.500H18" c="#333" w={1.2} /><circle cx="9.500" cy="8.500" r="3.500" fill="#111" /></>),
  Story: (<><rect x="2" y="2" width="14" height="15" fill="#eee" stroke="#222" /><G x="7" y="9" s="9" b>T</G><L d="M10 6.500H14M10 8.500H14M5 10.500H14M5 12.500H14M5 14.500H14" c="#555" /></>),
  Align: (<><L d="M2.500 1V17" /><rect x="5" y="3" width="8" height="5" fill="#777" /><rect x="5" y="10" width="12" height="5" fill="#333" /></>),
  Pathfinder: (<><rect x="2" y="1" width="9" height="9" fill="#444" /><rect x="7" y="6" width="10" height="10" fill="#333" /><rect x="7" y="6" width="4" height="4" fill="#333" stroke="#ddd" /></>),
  Color: (<><path d="M1 11Q1 5 8 3Q13 0 17 3Q19 5 17 7Q15 9 17 11Q14 16 8 16Q2 17 1 11z" fill="#333" /><circle cx="7" cy="7" r="1.500" fill="#ddd" /><circle cx="12" cy="5" r="1.500" fill="#ddd" /><circle cx="4.500" cy="11" r="1.500" fill="#ddd" /><circle cx="8" cy="13.500" r="1.500" fill="#ddd" /><circle cx="13" cy="12" r="1.500" fill="#ddd" /></>),
  Character: (<><G x="8" y="14" s="16" f={SANS} b c="#444">A</G><L d="M15.500 1V17" /></>),
  "Background Tasks": (
    <>{Array.from({ length: 12 }, (_, k) => {
      const v = 40 + ((k + 6) % 12) * 13;
      return <path key={k} d="M9 0V5" stroke={`rgb(${v},${v},${v})`} strokeWidth="1.600" transform={`rotate(${k * 30} 9 9)`} />;
    })}</>
  ),
};
const dockGroups = [
  ["Pages", "Layers", "Links"],
  ["Gradient", "Stroke", "Swatches"],
  ["Paragraph", "Effects", "Object Styles"],
  ["Paragraph Styles"],
  ["Character Styles"],
  ["Glyphs"],
  ["Text Wrap"],
  ["Story"],
  ["Align", "Pathfinder"],
  ["Color"],
  ["Character"],
  ["Background Tasks"],
];

const menus = ["InDesign", "File", "Edit", "Layout", "Type", "Object", "Table", "View", "Window", "Help"];

export default function App() {
  return (
    <>
      <GlobalStyle />
      <Page>
        <MenuBar>
          <Svg w={15} h={17}>
            <path d="M10.500 0Q10.500 3 7.500 4Q7.300 1.500 10.500 0zM13.500 5.500Q11.500 6.500 11.700 9Q12 11.500 14 12.200Q12.500 16 10.500 16Q9 15.300 7.500 15.400Q6 16.200 5 16Q1 13.500 1 9Q1.500 5 4.500 4.500Q6 4.600 7.300 5.200Q9.500 4.300 10.500 4.400Q12.500 4.500 13.500 5.500z" fill="#111" />
          </Svg>
          <MenuNav>{menus.map((m, k) => <MenuItem key={m} $bold={k === 0}>{m}</MenuItem>)}</MenuNav>
          <StatusItems $gap={12}>
            <StatusItems $gap={11}>
              <Svg w={18} h={17}>
                <path d="M5 1L9 4L5 6.500L1 4zM13 1L17 4L13 6.500L9 4zM5 7L9 9.500L5 12.500L1 9.500zM13 7L17 9.500L13 12.500L9 9.500zM9 10.500L13 13.500L9 16L5 13.500z" fill="#111" />
              </Svg>
              <Svg w={20} h={15}>
                <path d="M6 13.500A5 5 0 0 1 5 4.500A6 6 0 0 1 15.500 4A5 5 0 0 1 15 13.500z" stroke="#777" strokeWidth="1.600" />
                <path d="M11 10.500A2.700 2.700 0 1 0 11.500 5.500L7 10.500A2.600 2.600 0 1 1 7.500 6" stroke="#777" strokeWidth="1.800" />
              </Svg>
              <Svg w={22} h={16}><path d="M1 8.500L10 0L14 3V1H17V6L21 9H18V16H3V8.500z" fill="#000" /><path d="M11 9.500h6M11 12.500h6" stroke="#aaa" strokeDasharray="1 1" /></Svg>
              <Svg w={19} h={16}><path d="M5 11.500H1V1.500H18V11.500H14" stroke="#222" strokeWidth="1.500" /><path d="M4 15L9.500 8L15 15z" fill="#111" /></Svg>
              <Svg w={18} h={14}><rect x="1" y="1" width="16" height="12" rx="2" fill="#222" stroke="#000" /><path d="M4.500 4V10M7.500 4V10M10.500 4V10M13.500 4V10" stroke="#ccc" /></Svg>
              <Svg w={14} h={14}><path d="M0 5H3L8 1V13L3 9H0z" fill="#111" /><path d="M10 4.500Q12 7 10 9.500" stroke="#333" strokeWidth="1.300" /></Svg>
              <Svg w={21} h={16}><path d="M1 6Q10.500-2.500 20 6M4.500 9Q10.500 3.500 16.500 9M7.500 12Q10.500 9.500 13.500 12" stroke="#111" strokeWidth="1.900" /><circle cx="10.500" cy="14" r="1.500" fill="#111" /></Svg>
            </StatusItems>
            <Battery>
              100%
              <Svg w={23} h={13}><rect x="0.500" y="0.500" width="19" height="12" rx="2" stroke="#222" /><rect x="2" y="2" width="16" height="9" fill="#222" /><path d="M12 1L6 7H9.500L8 12L14 6H10.500z" fill="#222" stroke="#ccc" /><rect x="21" y="4" width="1.500" height="5" fill="#222" /></Svg>
            </Battery>
            <StatusItems $gap={19}>
              <span>Sun 4:53 PM</span>
              <MenuItem $bold>Troy Liming</MenuItem>
            </StatusItems>
            <Svg w={28} h={15}><circle cx="16" cy="6.500" r="4.500" stroke="#222" strokeWidth="1.500" /><L d="M19.500 10L23.500 14" w={1.800} /></Svg>
            <Svg w={19} h={12}><L d="M4 1.500H19M4 6H16M4 10.500H19" c="#888" w={1.500} /><L d="M0 1.500H2M0 6H2M0 10.500H2" c="#888" w={1.500} /></Svg>
          </StatusItems>
        </MenuBar>
        <Controls />
        <Workspace>
          <DocWindow>
            <TitleBar>
              <Lights>
                <Light $c="#fc4a48" aria-label="Close"><Svg w={4} h={4}><circle cx="2" cy="2" r="2" fill="#4d0000" /></Svg></Light>
                <Light $c="#fdb225" aria-label="Minimize" />
                <Light $c="#27c33a" aria-label="Zoom" />
              </Lights>
              <p>*Untitled-3 @ 100%</p>
            </TitleBar>
            <Corner><Svg w={15} h={15}><L d="M5.500 0V15M0 5.500H15" strokeDasharray="1 1" /></Svg></Corner>
            <HRuler>{Array.from({ length: 19 }, (_, k) => <HInch key={k}>{k > 0 && Math.abs(k - 3)}</HInch>)}</HRuler>
            <VRuler>{Array.from({ length: 8 }, (_, k) => <VInch key={k}>{k > 0 && k}</VInch>)}</VRuler>
            <Canvas>
              <Guide $x={219} $c="#000" />
              <Guide $x={267} $c="#9333ea" />
              <Guide $x={1515} $c="#9333ea" />
              <Guide $x={1563} $c="#000" $w={2} />
              <TextFrame><Headline>My Services<Caret /></Headline></TextFrame>
              <ToolPalette />
            </Canvas>
            <VScroll><Thumb $w={8} $h={398} /></VScroll>
            <StatusBar>
              <StatusControls>
                <StatusButton $w={15} aria-label="First page"><Svg w={7} h={7}><path d="M0 0h1.500v7H0zM7 0L2.500 3.500L7 7z" fill="#777" /></Svg></StatusButton>
                <StatusButton $w={15} aria-label="Previous page"><Tri dir="left" c="#777" w={5} h={7} /></StatusButton>
                <PageInput aria-label="Page" defaultValue="1" />
                <StatusButton $w={18} aria-label="Choose page"><Tri dir="down" w={7} h={4} /></StatusButton>
                <StatusButton $w={16} aria-label="Next page"><Tri dir="right" c="#777" w={5} h={7} /></StatusButton>
                <StatusButton $w={14} aria-label="Last page"><Svg w={7} h={7}><path d="M5.500 0H7v7H5.500zM0 0L4.500 3.500L0 7z" fill="#777" /></Svg></StatusButton>
                <StatusButton $w={28} aria-label="Open in"><Svg w={16} h={13}><circle cx="6.500" cy="6.500" r="5.500" fill="#aaa" stroke="#666" /><path d="M4.500 4.500H7L9.500 7V9.500H4.500z" fill="#eee" stroke="#444" /><path d="M12 10h4l-2 2z" fill="#000" /></Svg></StatusButton>
                <Preflight><Lamp />No errors</Preflight>
                <StatusButton $w={20} aria-label="Preflight menu"><Tri dir="down" c="#333" w={5} h={4} /></StatusButton>
              </StatusControls>
              <HTrack><Thumb $w={463} $h={8} /></HTrack>
              <Svg w={32} h={14}><path d="M3 1h6v11H3zM11 1h6v11h-6z" fill="#999" /><path d="M28.500 3V14M25.500 6V14M22.500 9V14M31 1V14" stroke="#999" strokeDasharray="1 1" /></Svg>
            </StatusBar>
          </DocWindow>
          <Dock>
            <DockHead><DoubleLeft /></DockHead>
            {dockGroups.map((g) => (
              <DockGroup key={g[0]}>
                <Grip />
                {g.map((n) => <DockItem key={n}><Svg w={19} h={18}>{dockIcons[n]}</Svg>{n}</DockItem>)}
              </DockGroup>
            ))}
          </Dock>
        </Workspace>
      </Page>
    </>
  );
}
